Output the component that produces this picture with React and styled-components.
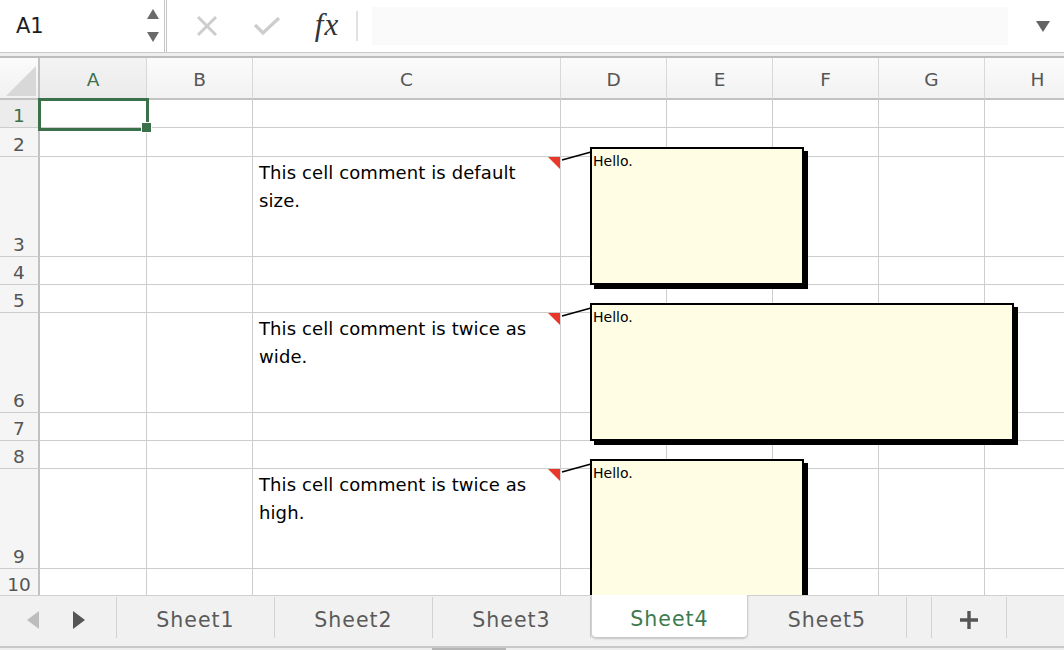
import React from 'react';
import styled, { createGlobalStyle } from 'styled-components';

const GlobalStyle = createGlobalStyle`
  html, body {
    margin: 0;
    padding: 0;
    background: #fff;
  }
  body {
    font-family: "DejaVu Sans", "Liberation Sans", sans-serif;
    overflow: hidden;
  }
`;

const GREEN = '#3a714b';
const GRID = '#cdcdcd';

const Window = styled.div`
  width: 1064px;
  height: 650px;
  display: flex;
  flex-direction: column;
  overflow: hidden;
  background: #fff;
`;

/* ---------- formula bar ---------- */

const FormulaBar = styled.div`
  height: 52px;
  display: flex;
  align-items: center;
  background: #fff;
`;

const NameBox = styled.div`
  width: 167px;
  height: 100%;
  display: flex;
  align-items: center;
  justify-content: space-between;
  padding: 0 4px 0 16px;
  box-sizing: border-box;
  border-right: 3px double #c6c6c6;
  font-size: 21px;
  color: #1e1e1e;
`;

const Tools = styled.div`
  display: flex;
  align-items: center;
  height: 100%;
  padding-left: 27px;
`;

const ToolIcon = styled.div`
  width: ${(p) => p.$w}px;
  margin-left: ${(p) => p.$gap || 0}px;
  display: flex;
  justify-content: center;
  align-items: center;
`;

const Fx = styled.span`
  font-family: "Liberation Serif", serif;
  font-style: italic;
  font-size: 31px;
  letter-spacing: 1px;
  color: #333;
  line-height: 1;
  padding-bottom: 4px;
`;

const ToolSep = styled.div`
  width: 2px;
  height: 30px;
  background: #e2e2e2;
  margin-left: 12px;
`;

const FormulaInput = styled.div`
  margin-left: 14px;
  width: 636px;
  height: 38px;
  background: #fafafa;
`;

const DropCaret = styled.div`
  flex: 1;
  display: flex;
  justify-content: center;
  padding-left: 14px;
`;

const BarDivider = styled.div`
  height: 6px;
  box-sizing: border-box;
  border-top: 1px solid #c9c9c9;
  border-bottom: 2px solid #bdbdbd;
  background: #eeeeee;
`;

/* ---------- sheet ---------- */

const Sheet = styled.div`
  position: relative;
  height: 537px;
  overflow: hidden;
`;

const Grid = styled.div`
  display: grid;
  grid-template-columns: 40px 107px 106px 308px repeat(5, 106px);
  grid-template-rows: ${(p) => p.$rows};
`;

const Corner = styled.div`
  background: linear-gradient(#fbfbfb, #f1f1f1);
  border-right: 2px solid #c2c2c2;
  border-bottom: 2px solid #c2c2c2;
  box-sizing: border-box;
  display: flex;
  align-items: flex-end;
  justify-content: flex-end;
  padding: 0 2px 2px 0;
`;

const ColHead = styled.div`
  background: ${(p) => (p.$active ? 'linear-gradient(#f3f3f3, #ebebeb)' : 'linear-gradient(#fbfbfb, #f2f2f2)')};
  border-right: 1px solid #d8d8d8;
  border-bottom: 2px solid #c2c2c2;
  box-sizing: border-box;
  display: flex;
  align-items: center;
  justify-content: center;
  padding-top: 2px;
  font-size: 18.5px;
  color: ${(p) => (p.$active ? GREEN : '#555')};
`;

const RowHead = styled.div`
  background: ${(p) => (p.$active ? '#ececec' : '#f5f5f5')};
  border-right: 2px solid #c2c2c2;
  border-bottom: 1px solid ${GRID};
  box-sizing: border-box;
  display: flex;
  align-items: flex-end;
  justify-content: center;
  font-size: 18.5px;
  line-height: 23px;
  color: ${(p) => (p.$active ? GREEN : '#555')};
`;

const Cell = styled.div`
  position: relative;
  border-right: 1px solid ${GRID};
  border-bottom: 1px solid ${GRID};
  box-sizing: border-box;
  padding: 2px 6px 0;
  font-size: 18px;
  line-height: 28px;
  letter-spacing: 0.1px;
  color: #000;
  white-space: nowrap;
`;

const CommentMark = styled.span`
  position: absolute;
  top: 0;
  right: 0;
  width: 0;
  height: 0;
  border-top: 12px solid #e8382b;
  border-left: 12px solid transparent;
`;

const Selection = styled.div`
  position: absolute;
  left: 38px;
  top: 40px;
  width: 111px;
  height: 33px;
  box-sizing: border-box;
  border: 3px solid ${GREEN};
  pointer-events: none;
`;

const FillHandle = styled.div`
  position: absolute;
  left: 141px;
  top: 64px;
  width: 11px;
  height: 11px;
  box-sizing: border-box;
  background: ${GREEN};
  border: 1px solid #fff;
`;

const Leaders = styled.svg`
  position: absolute;
  left: 0;
  top: 0;
  pointer-events: none;
`;

const CommentBox = styled.div`
  position: absolute;
  left: ${(p) => p.$x}px;
  top: ${(p) => p.$y}px;
  width: ${(p) => p.$w}px;
  height: ${(p) => p.$h}px;
  box-sizing: border-box;
  border: 2px solid #000;
  background: #fffde4;
  box-shadow: 4px 4px 0 #000;
  padding: 4px 1px;
  font-size: 14px;
  line-height: 17px;
  color: #000;
`;

/* ---------- sheet tabs ---------- */

const TabBar = styled.div`
  height: 51px;
  display: flex;
  align-items: flex-start;
  background: #f1f1f1;
  border-top: 1px solid #cfcfcf;
  box-sizing: border-box;
`;

const Nav = styled.div`
  width: 117px;
  height: 41px;
  margin-top: 1px;
  display: flex;
  align-items: center;
  padding: 4px 0 0 26px;
  gap: 32px;
  box-sizing: border-box;
  border-right: 1px solid #d2d2d2;
`;

const Tab = styled.div`
  width: ${(p) => p.$w}px;
  height: ${(p) => (p.$active ? 43 : 41)}px;
  margin-top: ${(p) => (p.$active ? -1 : 1)}px;
  display: flex;
  align-items: center;
  justify-content: center;
  box-sizing: border-box;
  font-size: 20.5px;
  line-height: 26px;
  letter-spacing: 1px;
  color: ${(p) => (p.$active ? '#3d7a4f' : '#5a5a5a')};
  background: ${(p) => (p.$active ? '#fff' : 'transparent')};
  border-right: 1px solid ${(p) => (p.$active ? '#cfcfcf' : '#d2d2d2')};
  border-left: ${(p) => (p.$active ? '1px solid #cfcfcf' : 'none')};
  border-bottom: ${(p) => (p.$active ? '1px solid #c8c8c8' : 'none')};
  border-radius: ${(p) => (p.$active ? '0 0 5px 5px' : '0')};
  box-shadow: ${(p) => (p.$active ? '0 1px 2px rgba(0,0,0,0.18)' : 'none')};
  padding-top: ${(p) => (p.$active ? 6 : 4)}px;
`;

const AddTab = styled.div`
  width: 76px;
  height: 41px;
  margin-top: 1px;
  margin-left: 24px;
  padding-top: 4px;
  display: flex;
  align-items: center;
  justify-content: center;
  box-sizing: border-box;
  border-left: 1px solid #d2d2d2;
  border-right: 1px solid #d2d2d2;
`;

const ScrollTrack = styled.div`
  height: 4px;
  display: flex;
  box-sizing: border-box;
  border-top: 2px solid #c9c9c9;
  background: #eeeeee;
`;

const ScrollThumb = styled.div`
  margin-left: 432px;
  width: 74px;
  background: #b5b5b5;
`;

const COLS = ['A', 'B', 'C', 'D', 'E', 'F', 'G', 'H'];

const ROWS = [
  { n: 1, h: 28 },
  { n: 2, h: 29 },
  { n: 3, h: 100, text: ['This cell comment is default', 'size.'] },
  { n: 4, h: 28 },
  { n: 5, h: 28 },
  { n: 6, h: 100, text: ['This cell comment is twice as', 'wide.'] },
  { n: 7, h: 28 },
  { n: 8, h: 28 },
  { n: 9, h: 100, text: ['This cell comment is twice as', 'high.'] },
  { n: 10, h: 28 },
];

const COMMENTS = [
  { x: 590, y: 89, w: 214, h: 138, mark: 100 },
  { x: 590, y: 245, w: 424, h: 138, mark: 256 },
  { x: 590, y: 401, w: 214, h: 280, mark: 412 },
];

const SHEETS = [
  { name: 'Sheet1', w: 158 },
  { name: 'Sheet2', w: 158 },
  { name: 'Sheet3', w: 158 },
  { name: 'Sheet4', w: 157, active: true },
  { name: 'Sheet5', w: 159 },
];

const Spinner = () => (
  <svg width="14" height="36" viewBox="0 0 14 36">
    <path d="M7 1 L13 11 L1 11 Z" fill="#6a6a6a" />
    <path d="M1 24 L13 24 L7 34 Z" fill="#6a6a6a" />
  </svg>
);

const App = () => {
  const rowTemplate = ['42px', ...ROWS.map((r) => `${r.h}px`)].join(' ');

  return (
    <Window>
      <GlobalStyle />
      <FormulaBar>
        <NameBox>
          A1
          <Spinner />
        </NameBox>
        <Tools>
          <ToolIcon $w={26}>
            <svg width="22" height="22" viewBox="0 0 22 22">
              <path d="M2 2 L20 20 M20 2 L2 20" stroke="#cdcdcd" strokeWidth="3" />
            </svg>
          </ToolIcon>
          <ToolIcon $w={30} $gap={32}>
            <svg width="28" height="20" viewBox="0 0 28 20">
              <path d="M2 9 L10 17 L26 2" stroke="#cdcdcd" strokeWidth="3.2" fill="none" />
            </svg>
          </ToolIcon>
          <ToolIcon $w={34} $gap={28}>
            <Fx>fx</Fx>
          </ToolIcon>
          <ToolSep />
        </Tools>
        <FormulaInput />
        <DropCaret>
          <svg width="14" height="11" viewBox="0 0 14 11">
            <path d="M0 0 L14 0 L7 11 Z" fill="#636363" />
          </svg>
        </DropCaret>
      </FormulaBar>
      <BarDivider />

      <Sheet>
        <Grid $rows={rowTemplate}>
          <Corner>
            <svg width="30" height="30" viewBox="0 0 30 30">
              <path d="M30 0 L30 30 L0 30 Z" fill="#d8d8d8" />
            </svg>
          </Corner>
          {COLS.map((c) => (
            <ColHead key={c} $active={c === 'A'}>
              {c}
            </ColHead>
          ))}
          {ROWS.map((r) => (
            <React.Fragment key={r.n}>
              <RowHead $active={r.n === 1}>{r.n}</RowHead>
              {COLS.map((c) => (
                <Cell key={c}>
                  {c === 'C' && r.text && (
                    <>
                      {r.text[0]}
                      <br />
                      {r.text[1]}
                      <CommentMark />
                    </>
                  )}
                </Cell>
              ))}
            </React.Fragment>
          ))}
        </Grid>

        <Selection />
        <FillHandle />

        <Leaders width="1064" height="537">
          {COMMENTS.map((cm) => (
            <line
              key={cm.y}
              x1="562"
              y1={cm.mark + 2}
              x2={cm.x + 1}
              y2={cm.y + 5}
              stroke="#000"
              strokeWidth="1.6"
            />
          ))}
        </Leaders>

        {COMMENTS.map((cm) => (
          <CommentBox key={cm.y} $x={cm.x} $y={cm.y} $w={cm.w} $h={cm.h}>
            Hello.
          </CommentBox>
        ))}
      </Sheet>

      <TabBar>
        <Nav>
          <svg width="14" height="20" viewBox="0 0 14 20">
            <path d="M13 1 L13 19 L1 10 Z" fill="#bdbdbd" />
          </svg>
          <svg width="14" height="20" viewBox="0 0 14 20">
            <path d="M1 1 L1 19 L13 10 Z" fill="#555" />
          </svg>
        </Nav>
        {SHEETS.map((s) => (
          <Tab key={s.name} $w={s.w} $active={s.active}>
            {s.name}
          </Tab>
        ))}
        <AddTab>
          <svg width="22" height="22" viewBox="0 0 22 22">
            <path d="M11 2 V20 M2 11 H20" stroke="#555" strokeWidth="3.4" />
          </svg>
        </AddTab>
      </TabBar>
      <ScrollTrack>
        <ScrollThumb />
      </ScrollTrack>
    </Window>
  );
};

export default App;
